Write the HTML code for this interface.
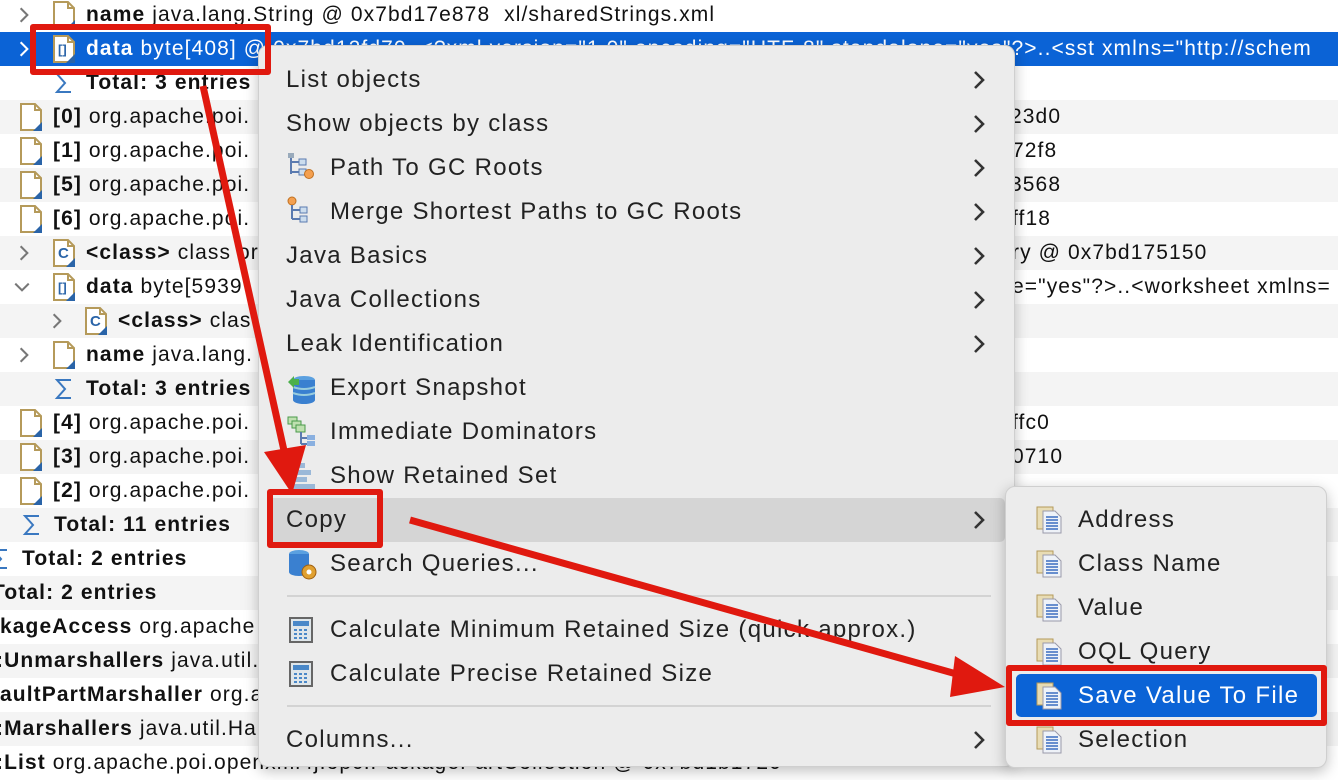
<!DOCTYPE html>
<html><head><meta charset="utf-8"><style>
*{margin:0;padding:0;box-sizing:border-box}
body{width:1338px;height:772px;overflow:hidden;background:#fff;font-family:"Liberation Sans",sans-serif;position:relative;color:#111}
.row{position:absolute;left:0;width:1338px;height:34px;font-size:21px;letter-spacing:1.1px;line-height:34px;white-space:nowrap}
.g{background:#f4f4f4}
.sel{background:#0b63d6;color:#fff}
.t{position:absolute;top:0}
b{font-weight:bold}
.chev{position:absolute;top:8px;width:18px;height:18px}
.ic{position:absolute;top:3px}
.ict{position:absolute;font-size:13px;font-weight:bold;color:#2a64a8;letter-spacing:0;line-height:14px}
.menu{position:absolute;left:258px;top:45px;width:757px;height:722px;background:#ececec;border:1px solid #cfcfcf;border-radius:10px;box-shadow:0 4px 14px rgba(0,0,0,.25)}
.mi{position:absolute;font-size:24px;letter-spacing:1.3px;line-height:44px;height:44px;color:#222;white-space:nowrap}
.arr{position:absolute;left:713px;width:14px;height:20px}
.sep{position:absolute;left:28px;width:704px;height:2px;background:#d3d3d3}
.sub{position:absolute;left:1005px;top:486px;width:322px;height:282px;background:#ececec;border:1px solid #cfcfcf;border-radius:10px;box-shadow:0 4px 14px rgba(0,0,0,.25)}
.red{position:absolute;border:6px solid #e0190f;border-radius:3px}
</style></head><body>
<svg width="0" height="0" style="position:absolute">
<defs>
<symbol id="pg" viewBox="0 0 24 28"><path d="M2 1h14l6 6v20H2z" fill="#fff" stroke="#b59a5a" stroke-width="2"/><path d="M16 1v6h6" fill="none" stroke="#b59a5a" stroke-width="2"/><path d="M23 19v9h-9z" fill="#2a64a8"/></symbol>
<symbol id="chr" viewBox="0 0 16 16"><path d="M5 2l6 6-6 6" fill="none" stroke="#777" stroke-width="1.8"/></symbol>
<symbol id="chw" viewBox="0 0 16 16"><path d="M5 2l6 6-6 6" fill="none" stroke="#fff" stroke-width="1.8"/></symbol>
<symbol id="chd" viewBox="0 0 16 16"><path d="M2 5l6 6 6-6" fill="none" stroke="#777" stroke-width="1.8"/></symbol>
<symbol id="sig" viewBox="0 0 20 24"><path d="M17 3H3l8 9-8 9h14" fill="none" stroke="#3a78c0" stroke-width="2"/></symbol>
<symbol id="ma" viewBox="0 0 14 20"><path d="M3 2l8 8-8 8" fill="none" stroke="#333" stroke-width="2.6"/></symbol>
<symbol id="cp" viewBox="0 0 28 30"><rect x="2" y="2" width="16" height="22" fill="#e8dcb4" stroke="#b59a5a"/><path d="M8 6h12l6 6v16H8z" fill="#eef2f8" stroke="#9a9aaa"/><path d="M11 12h12M11 15h12M11 18h12M11 21h12M11 24h12" stroke="#3a6cc0" stroke-width="1.6"/></symbol>
<symbol id="calc" viewBox="0 0 24 26"><rect x="1" y="1" width="22" height="24" fill="#dfe6ea" stroke="#666" stroke-width="2"/><rect x="4" y="4" width="16" height="5" fill="#4a88c8"/><path d="M5 13h3M10 13h3M15 13h3M5 17h3M10 17h3M15 17h3M5 21h3M10 21h3M15 21h3" stroke="#4a88c8" stroke-width="2"/></symbol>
</defs></svg>

<div class="row" style="top:-2px"><svg class="chev" style="left:15px"><use href="#chr"/></svg><svg class="ic" style="left:52px" width="24" height="28"><use href="#pg"/></svg><span class="t" style="left:86px"><b>name</b> java.lang.String @ 0x7bd17e878 &nbsp;xl/sharedStrings.xml</span></div>
<div class="row sel" style="top:32px"><svg class="chev" style="left:15px"><use href="#chw"/></svg><svg class="ic" style="left:52px" width="24" height="28"><use href="#pg"/></svg><span class="ict" style="left:58px;top:11px">[]</span><span class="t" style="left:86px"><b>data</b> byte[408] @ 0x7bd12fd70 &nbsp;&lt;?xml version="1.0" encoding="UTF-8" standalone="yes"?&gt;..&lt;sst xmlns="http://schem</span></div>
<div class="row" style="top:66px"><svg class="ic" style="left:54px;top:5px" width="20" height="24"><use href="#sig"/></svg><span class="t" style="left:86px"><b>Total: 3 entries</b></span></div>
<div class="row g" style="top:100px"><svg class="ic" style="left:19px" width="24" height="28"><use href="#pg"/></svg><span class="t" style="left:53px"><b>[0]</b> org.apache.poi.</span><span class="t" style="left:1010px">23d0</span></div>
<div class="row" style="top:134px"><svg class="ic" style="left:19px" width="24" height="28"><use href="#pg"/></svg><span class="t" style="left:53px"><b>[1]</b> org.apache.poi.</span><span class="t" style="left:1012px">72f8</span></div>
<div class="row g" style="top:168px"><svg class="ic" style="left:19px" width="24" height="28"><use href="#pg"/></svg><span class="t" style="left:53px"><b>[5]</b> org.apache.poi.</span><span class="t" style="left:1010px">3568</span></div>
<div class="row" style="top:202px"><svg class="ic" style="left:19px" width="24" height="28"><use href="#pg"/></svg><span class="t" style="left:53px"><b>[6]</b> org.apache.poi.</span><span class="t" style="left:1012px">ff18</span></div>
<div class="row g" style="top:236px"><svg class="chev" style="left:15px"><use href="#chr"/></svg><svg class="ic" style="left:52px" width="24" height="28"><use href="#pg"/></svg><span class="ict" style="left:58px;top:11px;font-size:15px">C</span><span class="t" style="left:86px"><b>&lt;class&gt;</b> class or</span><span class="t" style="left:1012px">ry @ 0x7bd175150</span></div>
<div class="row" style="top:270px"><svg class="chev" style="left:13px"><use href="#chd"/></svg><svg class="ic" style="left:52px" width="24" height="28"><use href="#pg"/></svg><span class="ict" style="left:58px;top:11px">[]</span><span class="t" style="left:86px"><b>data</b> byte[5939</span><span class="t" style="left:1012px">e="yes"?&gt;..&lt;worksheet xmlns=</span></div>
<div class="row g" style="top:304px"><svg class="chev" style="left:48px"><use href="#chr"/></svg><svg class="ic" style="left:84px" width="24" height="28"><use href="#pg"/></svg><span class="ict" style="left:90px;top:11px;font-size:15px">C</span><span class="t" style="left:118px"><b>&lt;class&gt;</b> clas</span></div>
<div class="row" style="top:338px"><svg class="chev" style="left:15px"><use href="#chr"/></svg><svg class="ic" style="left:52px" width="24" height="28"><use href="#pg"/></svg><span class="t" style="left:86px"><b>name</b> java.lang.</span></div>
<div class="row g" style="top:372px"><svg class="ic" style="left:54px;top:5px" width="20" height="24"><use href="#sig"/></svg><span class="t" style="left:86px"><b>Total: 3 entries</b></span></div>
<div class="row" style="top:406px"><svg class="ic" style="left:19px" width="24" height="28"><use href="#pg"/></svg><span class="t" style="left:53px"><b>[4]</b> org.apache.poi.</span><span class="t" style="left:1012px">ffc0</span></div>
<div class="row g" style="top:440px"><svg class="ic" style="left:19px" width="24" height="28"><use href="#pg"/></svg><span class="t" style="left:53px"><b>[3]</b> org.apache.poi.</span><span class="t" style="left:1012px">0710</span></div>
<div class="row" style="top:474px"><svg class="ic" style="left:19px" width="24" height="28"><use href="#pg"/></svg><span class="t" style="left:53px"><b>[2]</b> org.apache.poi.</span></div>
<div class="row g" style="top:508px"><svg class="ic" style="left:22px;top:5px" width="20" height="24"><use href="#sig"/></svg><span class="t" style="left:54px"><b>Total: 11 entries</b></span></div>
<div class="row" style="top:542px"><svg class="ic" style="left:-10px;top:5px" width="20" height="24"><use href="#sig"/></svg><span class="t" style="left:22px"><b>Total: 2 entries</b></span></div>
<div class="row g" style="top:576px"><span class="t" style="left:-8px"><b>Total: 2 entries</b></span></div>
<div class="row" style="top:610px"><span class="t" style="left:0"><b>kageAccess</b> org.apache</span></div>
<div class="row g" style="top:644px"><span class="t" style="left:-4px"><b>:Unmarshallers</b> java.util.</span></div>
<div class="row" style="top:678px"><span class="t" style="left:0"><b>aultPartMarshaller</b> org.a</span></div>
<div class="row g" style="top:712px"><span class="t" style="left:-4px"><b>:Marshallers</b> java.util.Ha</span></div>
<div class="row" style="top:746px"><span class="t" style="left:-4px"><b>:List</b> org.apache.poi.openxml4j.opc.PackagePartCollection @ 0x7bd1b1720</span></div>

<div class="menu">
<div class="mi" style="left:27px;top:12px">List objects</div><svg class="arr" style="top:24px"><use href="#ma"/></svg>
<div class="mi" style="left:27px;top:56px">Show objects by class</div><svg class="arr" style="top:68px"><use href="#ma"/></svg>
<svg style="position:absolute;left:28px;top:106px" width="28" height="28" viewBox="0 0 28 28"><path d="M4 2v20M4 10h8M4 20h8" stroke="#5a7ab0" stroke-width="2" fill="none"/><rect x="1" y="1" width="6" height="5" fill="#9ab" /><rect x="12" y="7" width="7" height="6" fill="#cde" stroke="#5a7ab0"/><rect x="12" y="17" width="7" height="6" fill="#cde" stroke="#5a7ab0"/><circle cx="22" cy="22" r="4.5" fill="#f4a050" stroke="#c07020"/></svg>
<div class="mi" style="left:71px;top:100px">Path To GC Roots</div><svg class="arr" style="top:112px"><use href="#ma"/></svg>
<svg style="position:absolute;left:28px;top:150px" width="28" height="28" viewBox="0 0 28 28"><circle cx="5" cy="5" r="4" fill="#f4a050" stroke="#c07020"/><path d="M5 9v14M5 14h8M5 23h8" stroke="#5a7ab0" stroke-width="2" fill="none"/><rect x="13" y="11" width="7" height="6" fill="#cde" stroke="#5a7ab0"/><rect x="13" y="20" width="7" height="6" fill="#cde" stroke="#5a7ab0"/></svg>
<div class="mi" style="left:71px;top:144px">Merge Shortest Paths to GC Roots</div><svg class="arr" style="top:156px"><use href="#ma"/></svg>
<div class="mi" style="left:27px;top:188px">Java Basics</div><svg class="arr" style="top:200px"><use href="#ma"/></svg>
<div class="mi" style="left:27px;top:232px">Java Collections</div><svg class="arr" style="top:244px"><use href="#ma"/></svg>
<div class="mi" style="left:27px;top:276px">Leak Identification</div><svg class="arr" style="top:288px"><use href="#ma"/></svg>
<svg style="position:absolute;left:27px;top:326px" width="32" height="32" viewBox="0 0 32 32"><ellipse cx="18" cy="8" rx="11" ry="4" fill="#5aa0e0"/><rect x="7" y="8" width="22" height="20" fill="#3a80d0"/><ellipse cx="18" cy="28" rx="11" ry="4" fill="#3a80d0"/><path d="M7 15q11 4 22 0M7 21q11 4 22 0" stroke="#9cd" stroke-width="2" fill="none"/><path d="M2 10l6-6v3h5v6H8v3z" fill="#4cb04c"/></svg>
<div class="mi" style="left:71px;top:320px">Export Snapshot</div>
<svg style="position:absolute;left:28px;top:370px" width="30" height="30" viewBox="0 0 30 30"><rect x="1" y="1" width="9" height="7" fill="#bfe0b0" stroke="#4a9a4a"/><rect x="5" y="5" width="9" height="7" fill="#bfe0b0" stroke="#4a9a4a"/><rect x="9" y="9" width="9" height="7" fill="#bfe0b0" stroke="#4a9a4a"/><path d="M14 16v12M14 22h6M14 28h6" stroke="#5a7ab0" stroke-width="2"/><rect x="20" y="19" width="8" height="5" fill="#8ab0e0"/><rect x="20" y="25" width="8" height="5" fill="#8ab0e0"/></svg>
<div class="mi" style="left:71px;top:364px">Immediate Dominators</div>
<svg style="position:absolute;left:28px;top:414px" width="30" height="30" viewBox="0 0 30 30"><rect x="6" y="3" width="12" height="5" fill="#9ab8d8"/><rect x="6" y="10" width="18" height="5" fill="#9ab8d8"/><rect x="6" y="17" width="14" height="5" fill="#9ab8d8"/><rect x="6" y="24" width="22" height="5" fill="#9ab8d8"/></svg>
<div class="mi" style="left:71px;top:408px">Show Retained Set</div>
<div style="position:absolute;left:8px;top:452px;width:738px;height:44px;background:#d5d5d5;border-radius:5px"></div>
<div class="mi" style="left:27px;top:452px">Copy</div><svg class="arr" style="top:464px"><use href="#ma"/></svg>
<svg style="position:absolute;left:27px;top:502px" width="32" height="32" viewBox="0 0 32 32"><ellipse cx="13" cy="6" rx="10" ry="4" fill="#5aa0e0"/><rect x="3" y="6" width="20" height="18" fill="#3a80d0"/><ellipse cx="13" cy="24" rx="10" ry="4" fill="#3a80d0"/><circle cx="23" cy="24" r="7" fill="#e0a030" stroke="#a06010"/><circle cx="23" cy="24" r="2.5" fill="#fff"/></svg>
<div class="mi" style="left:71px;top:496px">Search Queries...</div>
<div class="sep" style="top:549px"></div>
<svg style="position:absolute;left:30px;top:571px" width="24" height="26"><use href="#calc"/></svg>
<div class="mi" style="left:71px;top:562px">Calculate Minimum Retained Size (quick approx.)</div>
<svg style="position:absolute;left:30px;top:615px" width="24" height="26"><use href="#calc"/></svg>
<div class="mi" style="left:71px;top:606px">Calculate Precise Retained Size</div>
<div class="sep" style="top:659px"></div>
<div class="mi" style="left:27px;top:672px">Columns...</div><svg class="arr" style="top:684px"><use href="#ma"/></svg>
</div>

<div class="sub">
<svg style="position:absolute;left:29px;top:18px" width="28" height="30"><use href="#cp"/></svg><div class="mi" style="left:72px;top:11px">Address</div>
<svg style="position:absolute;left:29px;top:62px" width="28" height="30"><use href="#cp"/></svg><div class="mi" style="left:72px;top:55px">Class Name</div>
<svg style="position:absolute;left:29px;top:106px" width="28" height="30"><use href="#cp"/></svg><div class="mi" style="left:72px;top:99px">Value</div>
<svg style="position:absolute;left:29px;top:150px" width="28" height="30"><use href="#cp"/></svg><div class="mi" style="left:72px;top:143px">OQL Query</div>
<div style="position:absolute;left:10px;top:187px;width:301px;height:43px;background:#0b63d6;border-radius:5px"></div>
<svg style="position:absolute;left:29px;top:194px" width="28" height="30"><use href="#cp"/></svg><div class="mi" style="left:72px;top:187px;color:#fff">Save Value To File</div>
<svg style="position:absolute;left:29px;top:238px" width="28" height="30"><use href="#cp"/></svg><div class="mi" style="left:72px;top:231px">Selection</div>
</div>

<div class="red" style="left:30px;top:24px;width:241px;height:51px"></div>
<div class="red" style="left:267px;top:489px;width:116px;height:59px"></div>
<div class="red" style="left:1006px;top:665px;width:321px;height:61px"></div>
<svg style="position:absolute;left:0;top:0" width="1338" height="772">
<line x1="203" y1="86" x2="285" y2="455" stroke="#e0190f" stroke-width="7"/>
<polygon points="264,452 306,445 292,494" fill="#e0190f"/>
<line x1="410" y1="520" x2="960" y2="675" stroke="#e0190f" stroke-width="7"/>
<polygon points="955,656 1005,687 950,697" fill="#e0190f"/>
</svg>
</body></html>
